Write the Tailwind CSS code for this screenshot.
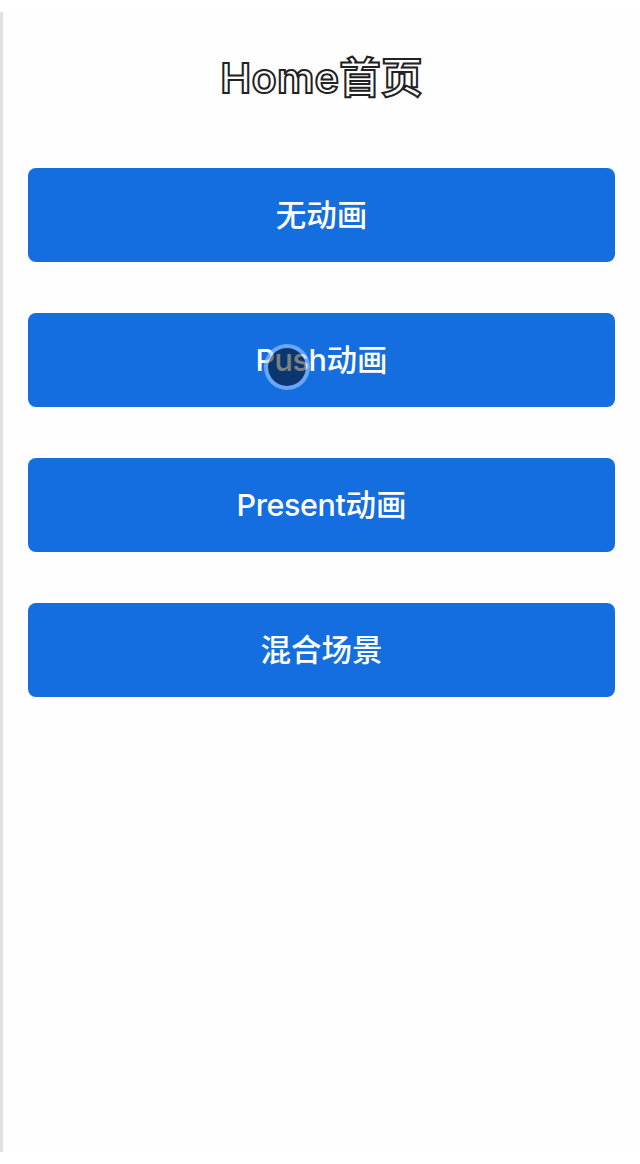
<!DOCTYPE html>
<html lang="zh-CN">
<head>
<meta charset="utf-8">
<title>Home首页</title>
<script src="https://cdn.jsdelivr.net/npm/@tailwindcss/browser@4"></script>
</head>
<body class="bg-white font-['Inter','Noto_Sans_CJK_SC',sans-serif]">
<div class="h-[1164px] py-3 overflow-hidden">
  <main class="relative h-[1140px] border-l-3 border-[#e1e1e1] bg-[#fefefe] pl-[25px] pr-[25px]">
    <h1 class="h-[156px] pt-[34px] text-center text-[41.5px] leading-[64px] font-semibold tracking-[0.2px] text-white [-webkit-text-stroke:2px_#222] whitespace-nowrap">Home首页</h1>
    <div class="flex flex-col gap-[51px] text-[30.5px] leading-none font-medium text-white">
      <button class="h-[94px] w-full rounded-lg bg-[#156ee0] pt-px">无动画</button>
      <button class="relative h-[94px] w-full rounded-lg bg-[#156ee0] pt-px"><span class="tracking-[-0.4px]">Push</span>动画
        <span class="absolute left-[236px] top-[31px] size-[46px] rounded-full border-4 border-[#a4ccff]/60 bg-black/50 bg-clip-padding"></span>
      </button>
      <button class="h-[94px] w-full rounded-lg bg-[#156ee0] pt-px"><span class="tracking-[-0.4px]">Present</span>动画</button>
      <button class="h-[94px] w-full rounded-lg bg-[#156ee0] pt-px">混合场景</button>
    </div>
  </main>
</div>
</body>
</html>
